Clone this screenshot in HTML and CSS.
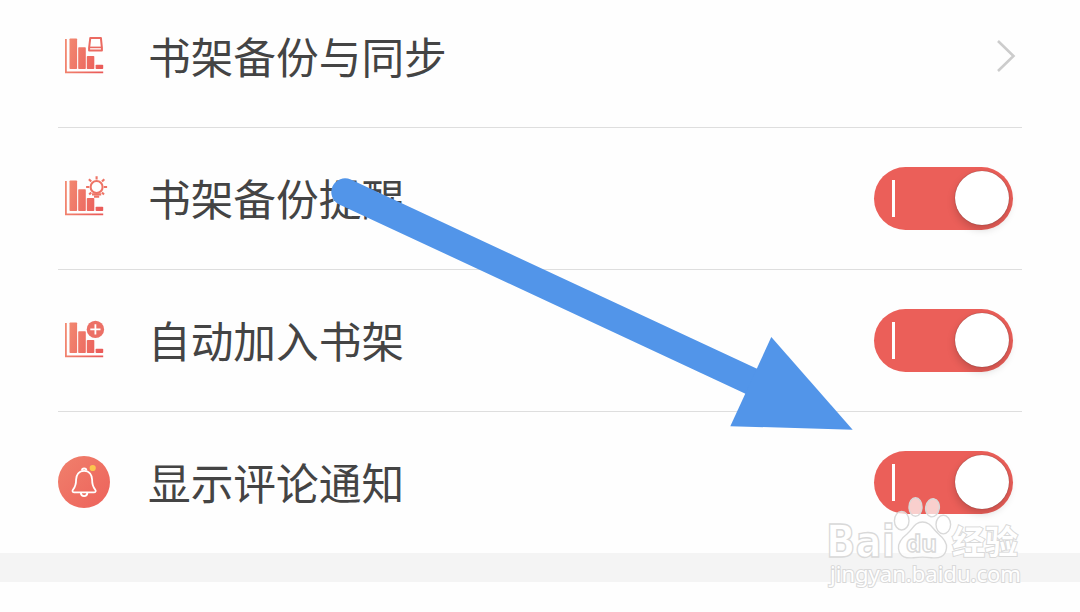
FILE: index.html
```html
<!DOCTYPE html>
<html lang="zh-CN">
<head>
    <meta charset="UTF-8">
    <title>书架设置</title>
    <link rel="stylesheet" href="styles.css">
</head>
<body>
    <svg class="defs" width="0" height="0">
        <defs>
            <linearGradient id="coral" gradientUnits="userSpaceOnUse" x1="6" y1="20" x2="46" y2="32">
                <stop offset="0" stop-color="#f28a72"/>
                <stop offset="1" stop-color="#ea5a58"/>
            </linearGradient>
            <linearGradient id="round" x1="0" y1="0" x2="1" y2="1">
                <stop offset="0" stop-color="#f0806c"/>
                <stop offset="1" stop-color="#ed625b"/>
            </linearGradient>
            <g id="bars" fill="url(#coral)">
                <path d="M7 9h1.8v32.4h36.4v1.8H7z"/>
                <rect x="11.5" y="8.5" width="7.6" height="30.6" rx="0.8"/>
                <rect x="20.2" y="17.2" width="7.6" height="21.9" rx="0.8"/>
                <rect x="28.8" y="26" width="7.5" height="13.1" rx="0.8"/>
                <rect x="37.6" y="34.7" width="7.6" height="4.4" rx="0.8"/>
            </g>
        </defs>
    </svg>

    <div class="list">
        <div class="row">
            <svg class="icon" viewBox="0 0 52 52">
                <use href="#bars"/>
                <path d="M32.3 7.900h10.600l1 10v2.600H31.100v-2.600z" fill="#fff" stroke="#eb6a61" stroke-width="2" stroke-linejoin="round"/>
                <path d="M31 17.400h13" stroke="#eb6a61" stroke-width="1.600"/>
            </svg>
            <span class="title">书架备份与同步</span>
            <svg class="chevron" viewBox="0 0 20 34">
                <path d="M2 2l15.5 15L2 32" fill="none" stroke="#cccccc" stroke-width="2.6"/>
            </svg>
        </div>
        <div class="row">
            <svg class="icon" viewBox="0 0 52 52">
                <use href="#bars"/>
                <g fill="none" stroke="#ee7466" stroke-width="2.1">
                    <circle cx="38.6" cy="15" r="6"/>
                    <path d="M38.6 7.4V4.2M33.2 9.6l-2.3-2.3M44 9.6l2.3-2.3M31.3 15h-3.2M45.9 15h3.2M33.2 20.4l-2 2M44 20.4l2 2"/>
                    <path d="M34 22.4h9.2M36 24.7h5.2"/>
                </g>
            </svg>
            <span class="title">书架备份提醒</span>
            <div class="switch"><div class="knob"></div></div>
        </div>
        <div class="row">
            <svg class="icon" viewBox="0 0 52 52">
                <use href="#bars"/>
                <circle cx="37.4" cy="15.4" r="8.7" fill="#ec7066"/>
                <path d="M37.4 10.3v10.2M32.3 15.4h10.2" stroke="#fff" stroke-width="1.8"/>
            </svg>
            <span class="title">自动加入书架</span>
            <div class="switch"><div class="knob"></div></div>
        </div>
        <div class="row">
            <svg class="icon" viewBox="0 0 52 52">
                <circle cx="26" cy="26" r="26" fill="url(#round)"/>
                <g fill="none" stroke="#fff" stroke-width="1.8" stroke-linejoin="round">
                    <path d="M23.9 14.6c0-2.8 4.5-2.8 4.5 0"/>
                    <path d="M26.1 14.8c-5.3 0-8 4.2-8 8.8 0 5.4-.5 7-2.9 9.7-1.2 1.5-.8 3 .8 3h20.2c1.6 0 2-1.500.8-3-2.4-2.700-2.900-4.300-2.900-9.700 0-4.600-2.700-8.800-8-8.800z"/>
                    <path d="M22.8 36.6c.3 4.600 6.300 4.600 6.600 0"/>
                </g>
                <circle cx="34.7" cy="12" r="3.1" fill="#fbc64e"/>
            </svg>
            <span class="title">显示评论通知</span>
            <div class="switch"><div class="knob"></div></div>
        </div>
    </div>
    <div class="gap"></div>

    <svg class="arrow" viewBox="0 0 1080 612">
        <path d="M345 192L755 383" stroke="#5295e9" stroke-width="27.4" stroke-linecap="round"/>
        <path d="M771.3 337L852.7 429.7 730.3 426.2z" fill="#5295e9"/>
    </svg>

    <svg class="watermark" viewBox="0 0 210 100">
        <g class="mark">
            <text class="latin" x="6" y="67" textLength="69" lengthAdjust="spacingAndGlyphs">Bai</text>
            <ellipse cx="81.7" cy="30.7" rx="7.3" ry="9.3"/>
            <ellipse cx="95.5" cy="17" rx="6.5" ry="9.3"/>
            <ellipse cx="112.5" cy="17.8" rx="6.8" ry="9.1" transform="rotate(10 112.5 17.8)"/>
            <ellipse cx="123.3" cy="34.6" rx="7.3" ry="9.3"/>
            <path d="M102.500 32c-8 0-9.500 7-15.500 12-6.500 5-9 9-8.500 14.500 1 9 8.500 10 15 9.200 6-.8 12-.8 18 0 7 .9 14-.7 15-9.700.6-5-2-9-8-14-6-5-8-12-16-12z"/>
            <text class="du" x="86" y="61.500" textLength="31" lengthAdjust="spacingAndGlyphs">du</text>
            <text class="cn" x="132" y="63.500">经验</text>
            <text class="url" x="10" y="92" textLength="191" lengthAdjust="spacingAndGlyphs">jingyan.baidu.com</text>
        </g>
    </svg>
</body>
</html>
```

FILE: styles.css
```css
* {
    box-sizing: border-box;
}

body {
    position: relative;
    height: 612px;
    margin: 0;
    overflow: hidden;
    background-color: #fefefe;
    font-family: "Noto Sans CJK SC", sans-serif;
}

.defs {
    display: block;
}

.list {
    margin-top: -14px;
    padding: 0 58px;
}

.row {
    display: flex;
    align-items: center;
    height: 142px;
    border-bottom: 1px solid #dedede;
}

.row:last-child {
    height: 141px;
    border-bottom: none;
}

.icon {
    width: 52px;
    height: 52px;
    margin-right: 38px;
    margin-bottom: 1px;
}

.title {
    flex: 1;
    padding-bottom: 3px;
    font-size: 42.7px;
    line-height: 60px;
    color: #444444;
}

.chevron {
    width: 20px;
    height: 34px;
    margin-right: 6px;
    margin-bottom: 2px;
}

.switch {
    display: flex;
    align-items: center;
    justify-content: space-between;
    width: 139px;
    height: 63px;
    margin-right: 9.5px;
    padding: 0 4px 1px 18px;
    border-radius: 32px;
    background-color: #eb5f59;
}

.switch::before {
    content: "";
    width: 3px;
    height: 37px;
    background-color: #ffffff;
}

.knob {
    width: 54px;
    height: 54px;
    border-radius: 50%;
    background-color: #ffffff;
    box-shadow: 0 4px 8px rgba(0, 0, 0, 0.18), 0 0 1px rgba(0, 0, 0, 0.5);
}

.gap {
    height: 29px;
    background-color: #f4f4f4;
}

.arrow {
    position: absolute;
    top: 0;
    left: 0;
    width: 1080px;
    height: 612px;
}

.watermark {
    position: absolute;
    top: 490px;
    left: 820px;
    width: 210px;
    height: 100px;
}

.mark {
    fill: rgba(255, 255, 255, 0.7);
    stroke: #d9d9d9;
    stroke-width: 1.4;
}

.latin {
    font: bold 44px "DejaVu Sans", sans-serif;
    fill: #ffffff;
}

.du {
    font: bold 23px "Noto Sans", sans-serif;
}

.cn {
    font: bold 33px "Noto Sans CJK SC", sans-serif;
    fill: #ffffff;
    stroke-width: 2;
    paint-order: stroke;
}

.url {
    font: 400 21.5px "Noto Sans", sans-serif;
    fill: #ffffff;
    stroke-width: 2;
    paint-order: stroke;
}
```
